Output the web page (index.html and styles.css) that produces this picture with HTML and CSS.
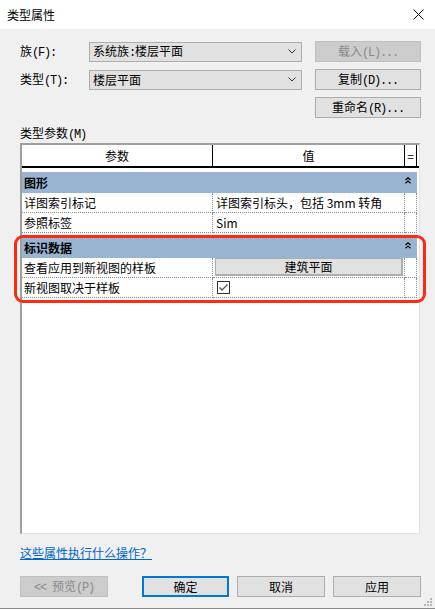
FILE: index.html
```html
<!DOCTYPE html>
<html lang="zh-CN">
<head>
<meta charset="utf-8">
<title>类型属性</title>
<link rel="stylesheet" href="styles.css">
</head>
<body>
<div class="window">
  <div class="titlebar">
    <span class="title">类型属性</span>
    <svg class="close" width="11" height="11" viewBox="0 0 11 11"><path d="M0.5 0.5 L10.5 10.5 M10.5 0.5 L0.5 10.5" stroke="#000" stroke-width="1" fill="none"/></svg>
  </div>
  <div class="content">
    <div class="form">
      <span class="label">族<span class="hw">(F):</span></span>
      <div class="select"><span>系统族<span class="hw">:</span>楼层平面</span><svg class="chev" width="8" height="5" viewBox="0 0 8 5"><polyline points="0.5,0.5 4,4 7.5,0.5" fill="none" stroke="#333" stroke-width="1"/></svg></div>
      <button class="btn btn-side disabled">载入<span class="hw">(L)...</span></button>
      <span class="label">类型<span class="hw">(T):</span></span>
      <div class="select"><span>楼层平面</span><svg class="chev" width="8" height="5" viewBox="0 0 8 5"><polyline points="0.5,0.5 4,4 7.5,0.5" fill="none" stroke="#333" stroke-width="1"/></svg></div>
      <button class="btn btn-side">复制<span class="hw">(D)...</span></button>
      <button class="btn btn-side btn-row3">重命名<span class="hw">(R)...</span></button>
    </div>
    <div class="section-label">类型参数<span class="hw">(M)</span></div>
    <div class="table">
      <div class="thead">
        <div class="th">参数</div>
        <div class="th">值</div>
        <div class="th">=</div>
      </div>
      <div class="group">
        <span>图形</span>
        <svg class="caret" width="6" height="7" viewBox="0 0 6 7"><polyline points="0.5,3 3,0.8 5.5,3" fill="none" stroke="#000" stroke-width="1.2"/><polyline points="0.5,6.2 3,4 5.5,6.2" fill="none" stroke="#000" stroke-width="1.2"/></svg>
      </div>
      <div class="row">
        <div class="td">详图索引标记</div>
        <div class="td val">详图索引标头，包括 3mm 转角</div>
        <div class="td"></div>
      </div>
      <div class="row">
        <div class="td">参照标签</div>
        <div class="td val">Sim</div>
        <div class="td"></div>
      </div>
      <div class="group">
        <span>标识数据</span>
        <svg class="caret" width="6" height="7" viewBox="0 0 6 7"><polyline points="0.5,3 3,0.8 5.5,3" fill="none" stroke="#000" stroke-width="1.2"/><polyline points="0.5,6.2 3,4 5.5,6.2" fill="none" stroke="#000" stroke-width="1.2"/></svg>
      </div>
      <div class="row">
        <div class="td">查看应用到新视图的样板</div>
        <div class="td cell-btn"><button class="inner-btn">建筑平面</button></div>
        <div class="td"></div>
      </div>
      <div class="row">
        <div class="td">新视图取决于样板</div>
        <div class="td cell-check"><span class="checkbox"><svg width="11" height="11" viewBox="0 0 11 11"><polyline points="1.5,5.5 4,8 9.5,2.5" fill="none" stroke="#555" stroke-width="1.3"/></svg></span></div>
        <div class="td"></div>
      </div>
    </div>
    <a class="link" href="#">这些属性执行什么操作？</a>
    <div class="actions">
      <button class="btn disabled btn-preview"><span class="hw">&lt;&lt; </span>预览<span class="hw">(P)</span></button>
      <button class="btn btn-ok">确定</button>
      <button class="btn btn-gap">取消</button>
      <button class="btn btn-gap">应用</button>
    </div>
  </div>
  <div class="highlight"></div>
  <svg class="grip" width="10" height="8" viewBox="0 0 10 8">
    <rect x="8" y="0" width="2" height="2" fill="#b5b5b5"/>
    <rect x="5" y="3" width="2" height="2" fill="#b5b5b5"/>
    <rect x="8" y="3" width="2" height="2" fill="#b5b5b5"/>
    <rect x="2" y="6" width="2" height="2" fill="#b5b5b5"/>
    <rect x="5" y="6" width="2" height="2" fill="#b5b5b5"/>
    <rect x="8" y="6" width="2" height="2" fill="#b5b5b5"/>
  </svg>
</div>
</body>
</html>
```

FILE: styles.css
```css
* { box-sizing: border-box; }
html, body { margin: 0; padding: 0; }
body {
  width: 435px;
  height: 609px;
  overflow: hidden;
  background: #f0f0f0;
  font-family: "Noto Sans CJK SC", "Noto Sans", sans-serif;
  font-size: 12px;
  line-height: 14px;
  color: #000;
}
.hw {
  font-family: "Liberation Mono", monospace;
  font-size: 12px;
  letter-spacing: -1.2px;
  white-space: pre;
}
.window {
  position: relative;
  height: 609px;
  border-bottom: 1px solid #8a8a8a;
  display: flex;
  flex-direction: column;
}
.titlebar {
  height: 29px;
  flex: none;
  background: #fff;
  display: flex;
  align-items: center;
  justify-content: space-between;
  padding: 0 11px 0 7px;
}
.title { font-size: 12px; line-height: 14px; }
.close { display: block; }

.content {
  padding: 12px 0 0 20px;
  display: flex;
  flex-direction: column;
}
.form {
  display: grid;
  grid-template-columns: 69px 213px 13px 106px;
  grid-template-rows: 21px 21px 21px;
  row-gap: 7px;
}
.label { align-self: center; grid-column: 1; }
.select {
  grid-column: 2;
  height: 20px;
  align-self: center;
  background: #e1e1e1;
  border: 1px solid #adadad;
  display: flex;
  align-items: center;
  justify-content: space-between;
  padding: 0 5px 0 3px;
}
.chev { display: block; }
.btn {
  font-family: inherit;
  font-size: 12px;
  line-height: 14px;
  color: #000;
  background: #e1e1e1;
  border: 1px solid #adadad;
  height: 21px;
  padding: 0;
  margin: 0;
}
.btn-side { grid-column: 4; }
.btn-row3 { grid-row: 3; }
.btn.disabled {
  background: #cccccc;
  border-color: #bfbfbf;
  color: #8a8a8a;
}

.section-label {
  margin-top: 7px;
  height: 16px;
  line-height: 16px;
}
.table {
  margin-top: 2px;
  width: 400px;
  height: 391px;
  background: #fff;
  border-style: solid;
  border-width: 2px 1px 1px 2px;
  border-color: #a0a0a0 #e3e3e3 #e3e3e3 #a0a0a0;
}
.thead, .row {
  display: grid;
  grid-template-columns: 191px 192px 12px;
}
.thead {
  height: 23px;
  border-bottom: 2px solid #000;
}
.th {
  border-right: 1px solid #000;
  display: flex;
  align-items: center;
  justify-content: center;
}
.group {
  margin-top: 4px;
  width: 395px;
  height: 21px;
  background: #99b4d1;
  font-weight: bold;
  display: flex;
  align-items: center;
  justify-content: space-between;
  padding: 0 6px 0 2px;
}
.caret { display: block; margin-top: -4px; }
.row { height: 20px; }
.td {
  border-right: 1px dotted #8c8c8c;
  border-bottom: 1px dotted #8c8c8c;
  display: flex;
  align-items: center;
  padding-left: 2px;
  white-space: nowrap;
  overflow: hidden;
}
.td.val { padding-left: 3px; }
.cell-btn { padding: 0 1px 1px 2px; align-items: stretch; }
.inner-btn {
  flex: 1;
  margin: 0;
  padding: 0;
  font-family: inherit;
  font-size: 12px;
  line-height: 14px;
  color: #000;
  background: #e1e1e1;
  border: 2px solid #adadad;
  border-width: 1px 2px 2px 1px;
}
.cell-check { padding-left: 4px; }
.checkbox {
  width: 13px;
  height: 13px;
  border: 1px solid #333;
  background: #fff;
  display: flex;
  align-items: center;
  justify-content: center;
}
.checkbox svg { display: block; }

.link {
  margin-top: 11px;
  align-self: flex-start;
  line-height: 15px;
  color: #0066cc;
  text-decoration: underline;
}
.actions {
  margin-top: 16px;
  display: flex;
}
.btn-preview { width: 88px; }
.btn-ok {
  width: 87px;
  margin-left: 34px;
  border: 2px solid #0078d7;
}
.btn-gap { width: 88px; margin-left: 8px; }

.highlight {
  position: absolute;
  left: 14px;
  top: 235px;
  width: 412px;
  height: 68px;
  border: 3px solid #ff2a14;
  border-radius: 9px;
  pointer-events: none;
}
.grip {
  position: absolute;
  right: 3px;
  bottom: 2px;
}
```
